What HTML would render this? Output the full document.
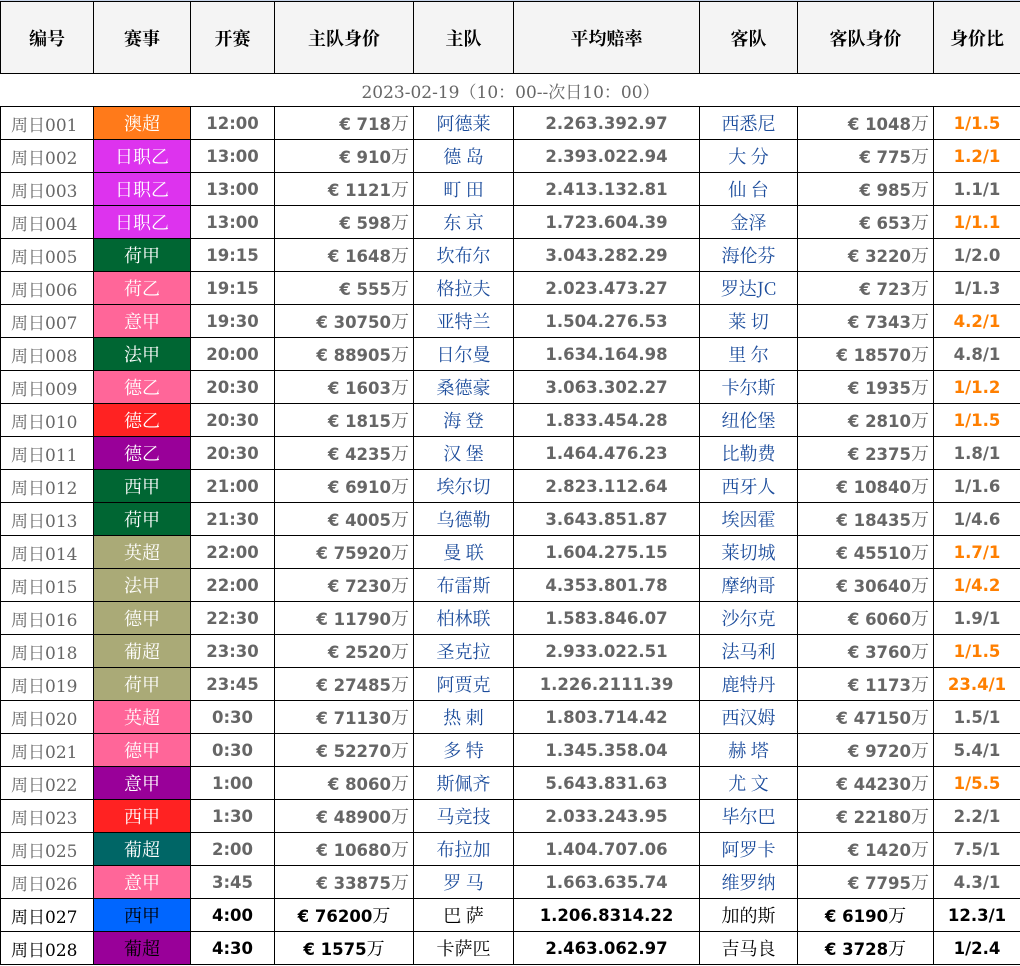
<!DOCTYPE html>
<html><head><meta charset="utf-8"><style>
html,body{margin:0;padding:0;background:#fff;width:1020px;height:965px;overflow:hidden}
body{border-top:1px solid #c8d4e8}
table{border-collapse:collapse;table-layout:fixed;width:1020px;font-family:"DejaVu Sans","Noto Serif CJK SC",sans-serif;}
td,th{border:1px solid #000;padding:0;height:32px;text-align:center;font-size:16.5px;white-space:nowrap;overflow:hidden}
th{height:71px;background:#f4f4f4;font-family:"Noto Serif CJK SC",serif;font-weight:bold;color:#000;font-size:18px}
td{color:#666;font-weight:bold}
td.id{font-weight:normal;font-family:"DejaVu Serif","Noto Serif CJK SC",serif;font-size:17px;text-align:left;padding-left:10px}
td.lg{color:#fff;font-weight:normal;font-family:"Noto Serif CJK SC",serif;font-size:18px}
td.tm{color:#1d4d9c;font-weight:normal;font-family:"Noto Serif CJK SC",serif;font-size:18px}
td.r{text-align:right;padding-right:4px}
td.o{color:#ff7f00}
td.date{font-weight:normal;font-family:"DejaVu Serif","Noto Serif CJK SC",serif;font-size:17px;color:#666;border-left:none;border-right:none}
tr.k td{color:#000}
tr.k td.r{text-align:center;padding-right:0}
.m{font-family:"Noto Serif CJK SC",serif;font-weight:normal;font-size:18px}
</style></head><body>
<table>
<colgroup><col style="width:93px"><col style="width:97px"><col style="width:84px"><col style="width:139px"><col style="width:100px"><col style="width:186px"><col style="width:98px"><col style="width:136px"><col style="width:87px"></colgroup>
<tr><th>编号</th><th>赛事</th><th>开赛</th><th>主队身价</th><th>主队</th><th>平均赔率</th><th>客队</th><th>客队身价</th><th>身价比</th></tr>
<tr><td colspan="9" class="date">2023-02-19（10：00--次日10：00）</td></tr>
<tr><td class="id">周日001</td><td class="lg" style="background:#ff7a1a">澳超</td><td>12:00</td><td class="r">€ 718<span class="m">万</span></td><td class="tm">阿德莱</td><td>2.263.392.97</td><td class="tm">西悉尼</td><td class="r">€ 1048<span class="m">万</span></td><td class="o">1/1.5</td></tr>
<tr><td class="id">周日002</td><td class="lg" style="background:#dd33ee">日职乙</td><td>13:00</td><td class="r">€ 910<span class="m">万</span></td><td class="tm">德 岛</td><td>2.393.022.94</td><td class="tm">大 分</td><td class="r">€ 775<span class="m">万</span></td><td class="o">1.2/1</td></tr>
<tr><td class="id">周日003</td><td class="lg" style="background:#dd33ee">日职乙</td><td>13:00</td><td class="r">€ 1121<span class="m">万</span></td><td class="tm">町 田</td><td>2.413.132.81</td><td class="tm">仙 台</td><td class="r">€ 985<span class="m">万</span></td><td>1.1/1</td></tr>
<tr><td class="id">周日004</td><td class="lg" style="background:#dd33ee">日职乙</td><td>13:00</td><td class="r">€ 598<span class="m">万</span></td><td class="tm">东 京</td><td>1.723.604.39</td><td class="tm">金泽</td><td class="r">€ 653<span class="m">万</span></td><td class="o">1/1.1</td></tr>
<tr><td class="id">周日005</td><td class="lg" style="background:#006633">荷甲</td><td>19:15</td><td class="r">€ 1648<span class="m">万</span></td><td class="tm">坎布尔</td><td>3.043.282.29</td><td class="tm">海伦芬</td><td class="r">€ 3220<span class="m">万</span></td><td>1/2.0</td></tr>
<tr><td class="id">周日006</td><td class="lg" style="background:#ff6699">荷乙</td><td>19:15</td><td class="r">€ 555<span class="m">万</span></td><td class="tm">格拉夫</td><td>2.023.473.27</td><td class="tm">罗达JC</td><td class="r">€ 723<span class="m">万</span></td><td>1/1.3</td></tr>
<tr><td class="id">周日007</td><td class="lg" style="background:#ff6699">意甲</td><td>19:30</td><td class="r">€ 30750<span class="m">万</span></td><td class="tm">亚特兰</td><td>1.504.276.53</td><td class="tm">莱 切</td><td class="r">€ 7343<span class="m">万</span></td><td class="o">4.2/1</td></tr>
<tr><td class="id">周日008</td><td class="lg" style="background:#006633">法甲</td><td>20:00</td><td class="r">€ 88905<span class="m">万</span></td><td class="tm">日尔曼</td><td>1.634.164.98</td><td class="tm">里 尔</td><td class="r">€ 18570<span class="m">万</span></td><td>4.8/1</td></tr>
<tr><td class="id">周日009</td><td class="lg" style="background:#ff6699">德乙</td><td>20:30</td><td class="r">€ 1603<span class="m">万</span></td><td class="tm">桑德豪</td><td>3.063.302.27</td><td class="tm">卡尔斯</td><td class="r">€ 1935<span class="m">万</span></td><td class="o">1/1.2</td></tr>
<tr><td class="id">周日010</td><td class="lg" style="background:#ff2222">德乙</td><td>20:30</td><td class="r">€ 1815<span class="m">万</span></td><td class="tm">海 登</td><td>1.833.454.28</td><td class="tm">纽伦堡</td><td class="r">€ 2810<span class="m">万</span></td><td class="o">1/1.5</td></tr>
<tr><td class="id">周日011</td><td class="lg" style="background:#990099">德乙</td><td>20:30</td><td class="r">€ 4235<span class="m">万</span></td><td class="tm">汉 堡</td><td>1.464.476.23</td><td class="tm">比勒费</td><td class="r">€ 2375<span class="m">万</span></td><td>1.8/1</td></tr>
<tr><td class="id">周日012</td><td class="lg" style="background:#006633">西甲</td><td>21:00</td><td class="r">€ 6910<span class="m">万</span></td><td class="tm">埃尔切</td><td>2.823.112.64</td><td class="tm">西牙人</td><td class="r">€ 10840<span class="m">万</span></td><td>1/1.6</td></tr>
<tr><td class="id">周日013</td><td class="lg" style="background:#006633">荷甲</td><td>21:30</td><td class="r">€ 4005<span class="m">万</span></td><td class="tm">乌德勒</td><td>3.643.851.87</td><td class="tm">埃因霍</td><td class="r">€ 18435<span class="m">万</span></td><td>1/4.6</td></tr>
<tr><td class="id">周日014</td><td class="lg" style="background:#aaaa77">英超</td><td>22:00</td><td class="r">€ 75920<span class="m">万</span></td><td class="tm">曼 联</td><td>1.604.275.15</td><td class="tm">莱切城</td><td class="r">€ 45510<span class="m">万</span></td><td class="o">1.7/1</td></tr>
<tr><td class="id">周日015</td><td class="lg" style="background:#aaaa77">法甲</td><td>22:00</td><td class="r">€ 7230<span class="m">万</span></td><td class="tm">布雷斯</td><td>4.353.801.78</td><td class="tm">摩纳哥</td><td class="r">€ 30640<span class="m">万</span></td><td class="o">1/4.2</td></tr>
<tr><td class="id">周日016</td><td class="lg" style="background:#aaaa77">德甲</td><td>22:30</td><td class="r">€ 11790<span class="m">万</span></td><td class="tm">柏林联</td><td>1.583.846.07</td><td class="tm">沙尔克</td><td class="r">€ 6060<span class="m">万</span></td><td>1.9/1</td></tr>
<tr><td class="id">周日018</td><td class="lg" style="background:#aaaa77">葡超</td><td>23:30</td><td class="r">€ 2520<span class="m">万</span></td><td class="tm">圣克拉</td><td>2.933.022.51</td><td class="tm">法马利</td><td class="r">€ 3760<span class="m">万</span></td><td class="o">1/1.5</td></tr>
<tr><td class="id">周日019</td><td class="lg" style="background:#aaaa77">荷甲</td><td>23:45</td><td class="r">€ 27485<span class="m">万</span></td><td class="tm">阿贾克</td><td>1.226.2111.39</td><td class="tm">鹿特丹</td><td class="r">€ 1173<span class="m">万</span></td><td class="o">23.4/1</td></tr>
<tr><td class="id">周日020</td><td class="lg" style="background:#ff6699">英超</td><td>0:30</td><td class="r">€ 71130<span class="m">万</span></td><td class="tm">热 刺</td><td>1.803.714.42</td><td class="tm">西汉姆</td><td class="r">€ 47150<span class="m">万</span></td><td>1.5/1</td></tr>
<tr><td class="id">周日021</td><td class="lg" style="background:#ff6699">德甲</td><td>0:30</td><td class="r">€ 52270<span class="m">万</span></td><td class="tm">多 特</td><td>1.345.358.04</td><td class="tm">赫 塔</td><td class="r">€ 9720<span class="m">万</span></td><td>5.4/1</td></tr>
<tr><td class="id">周日022</td><td class="lg" style="background:#990099">意甲</td><td>1:00</td><td class="r">€ 8060<span class="m">万</span></td><td class="tm">斯佩齐</td><td>5.643.831.63</td><td class="tm">尤 文</td><td class="r">€ 44230<span class="m">万</span></td><td class="o">1/5.5</td></tr>
<tr><td class="id">周日023</td><td class="lg" style="background:#ff2222">西甲</td><td>1:30</td><td class="r">€ 48900<span class="m">万</span></td><td class="tm">马竞技</td><td>2.033.243.95</td><td class="tm">毕尔巴</td><td class="r">€ 22180<span class="m">万</span></td><td>2.2/1</td></tr>
<tr><td class="id">周日025</td><td class="lg" style="background:#006666">葡超</td><td>2:00</td><td class="r">€ 10680<span class="m">万</span></td><td class="tm">布拉加</td><td>1.404.707.06</td><td class="tm">阿罗卡</td><td class="r">€ 1420<span class="m">万</span></td><td>7.5/1</td></tr>
<tr><td class="id">周日026</td><td class="lg" style="background:#ff6699">意甲</td><td>3:45</td><td class="r">€ 33875<span class="m">万</span></td><td class="tm">罗 马</td><td>1.663.635.74</td><td class="tm">维罗纳</td><td class="r">€ 7795<span class="m">万</span></td><td>4.3/1</td></tr>
<tr class="k"><td class="id">周日027</td><td class="lg" style="background:#0066ff;color:#000">西甲</td><td>4:00</td><td class="r">€ 76200<span class="m">万</span></td><td class="tm" style="color:#000">巴 萨</td><td>1.206.8314.22</td><td class="tm" style="color:#000">加的斯</td><td class="r">€ 6190<span class="m">万</span></td><td>12.3/1</td></tr>
<tr class="k"><td class="id">周日028</td><td class="lg" style="background:#990099;color:#000">葡超</td><td>4:30</td><td class="r">€ 1575<span class="m">万</span></td><td class="tm" style="color:#000">卡萨匹</td><td>2.463.062.97</td><td class="tm" style="color:#000">吉马良</td><td class="r">€ 3728<span class="m">万</span></td><td>1/2.4</td></tr>
</table>
</body></html>
